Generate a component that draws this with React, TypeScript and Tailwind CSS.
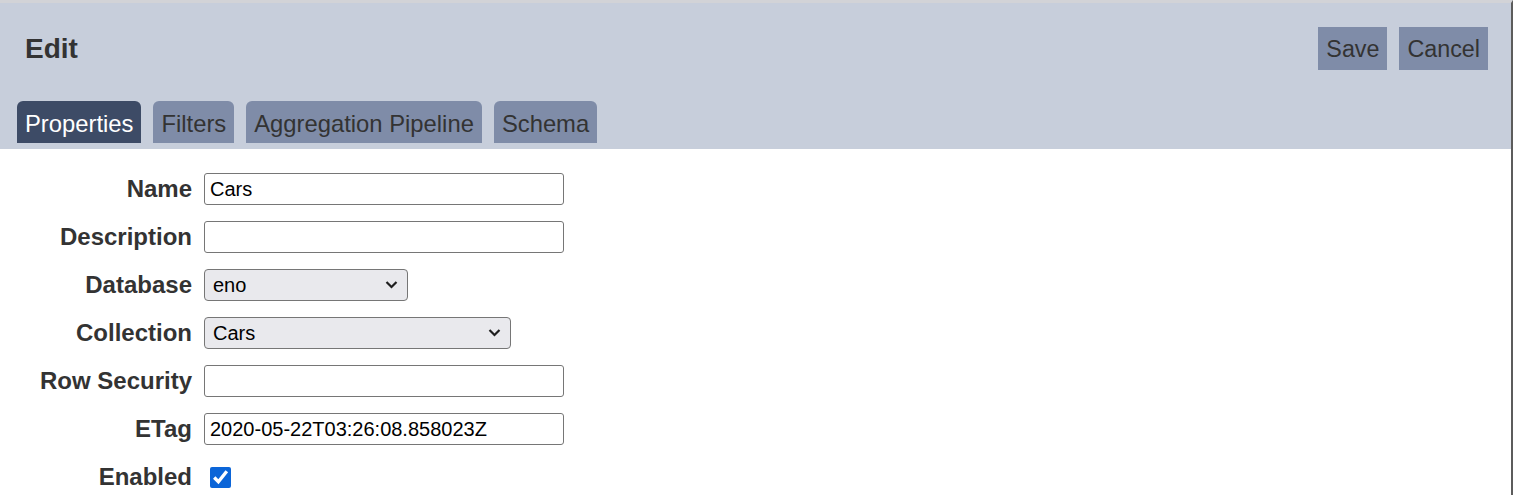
import React, { useState } from "react";

const tabs = ["Properties", "Filters", "Aggregation Pipeline", "Schema"];

function Chevron() {
  return (
    <svg
      className="pointer-events-none absolute right-[10px] top-1/2 -translate-y-1/2"
      width="13"
      height="9"
      viewBox="0 0 13 9"
      fill="none"
    >
      <path d="M1.5 1.5L6.5 6.5L11.5 1.5" stroke="#1f1f1f" strokeWidth="2.2" />
    </svg>
  );
}

export default function App() {
  const [activeTab, setActiveTab] = useState("Properties");
  const [enabled, setEnabled] = useState(true);

  const label = "text-right text-[24px] leading-[32px] font-bold text-[#333]";
  const input =
    "h-[32px] w-[360px] rounded-[3px] border border-[#767676] bg-white px-[5px] text-[20px] text-black outline-none";

  return (
    <div
      className="min-h-[495px] border-r-2 border-t-[3px] border-r-[#5c5c5c] border-t-[#d2d3d7] bg-white"
      style={{ fontFamily: '"Liberation Sans", Arial, sans-serif' }}
    >
      {/* header */}
      <div className="bg-[#c7cedb] pl-[17px] pr-[23px] pt-[24px] pb-[6px]">
        <div className="flex items-center justify-between">
          <h1 className="pl-2 pt-[1px] text-[28px] font-bold text-[#333]">Edit</h1>
          <div className="flex gap-3">
            <button className="h-[43px] bg-[#7f8ca8] px-2 pt-[2px] text-[23.3px] text-[#333]">Save</button>
            <button className="h-[43px] bg-[#7f8ca8] px-2 pt-[2px] text-[23.3px] text-[#333]">Cancel</button>
          </div>
        </div>
        <div className="mt-[31px] flex gap-3">
          {tabs.map((t) => (
            <button
              key={t}
              onClick={() => setActiveTab(t)}
              className={
                t === activeTab
                  ? "h-[42px] rounded-t-[6px] bg-[#3d4b66] px-2 pt-[4px] text-[23.8px] text-white"
                  : "h-[42px] rounded-t-[6px] bg-[#7f8ca8] px-2 pt-[4px] text-[23.8px] text-[#333]"
              }
            >
              {t}
            </button>
          ))}
        </div>
      </div>

      {/* form */}
      <div className="grid grid-cols-[192px_auto] items-center justify-start gap-x-3 gap-y-4 pt-[24px]">
        <label className={label}>Name</label>
        <input className={input} defaultValue="Cars" />

        <label className={label}>Description</label>
        <input className={input} defaultValue="" />

        <label className={label}>Database</label>
        <div className="relative w-[204px]">
          <select className="h-[32px] w-full appearance-none rounded-[4px] border border-[#767676] bg-[#e9e9ed] pl-[8px] text-[20px] text-black outline-none">
            <option>eno</option>
          </select>
          <Chevron />
        </div>

        <label className={label}>Collection</label>
        <div className="relative w-[307px]">
          <select className="h-[32px] w-full appearance-none rounded-[4px] border border-[#767676] bg-[#e9e9ed] pl-[8px] text-[20px] text-black outline-none">
            <option>Cars</option>
          </select>
          <Chevron />
        </div>

        <label className={label}>Row Security</label>
        <input className={input} defaultValue="" />

        <label className={label}>ETag</label>
        <input className={input} defaultValue="2020-05-22T03:26:08.858023Z" />

        <label className={label}>Enabled</label>
        <div className="flex h-[32px] items-center">
          <input
            type="checkbox"
            checked={enabled}
            onChange={() => setEnabled(!enabled)}
            className="ml-[6px] h-[21px] w-[21px] accent-[#0b65d8]"
          />
        </div>
      </div>
    </div>
  );
}
